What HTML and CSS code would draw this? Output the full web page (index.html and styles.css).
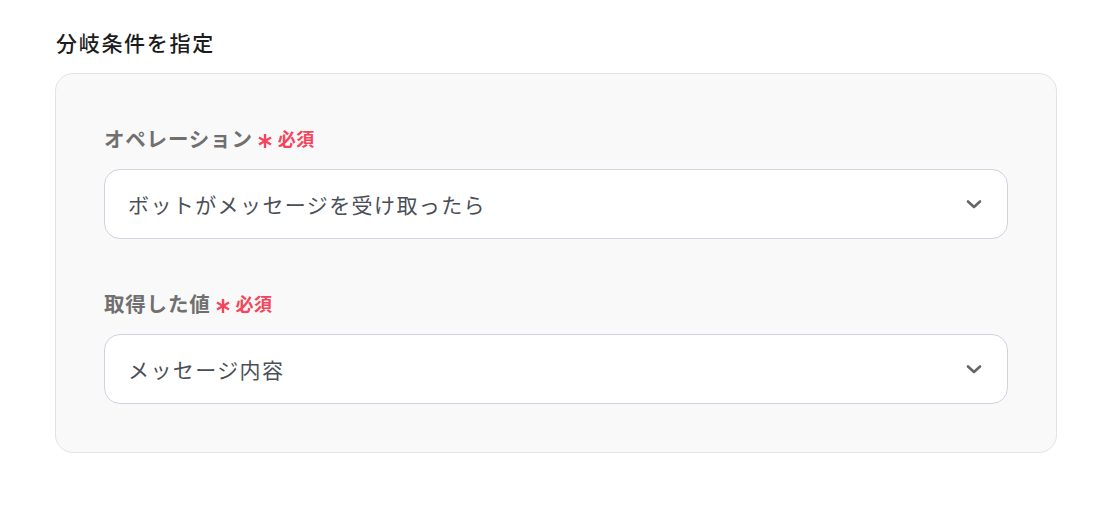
FILE: index.html
```html
<!DOCTYPE html>
<html lang="ja">
<head>
<meta charset="utf-8">
<link rel="stylesheet" href="styles.css">
</head>
<body>
<div class="page">
  <h2 class="title">分岐条件を指定</h2>
  <div class="card">
    <div class="field">
      <div class="label">オペレーション<svg class="ast" width="14" height="16" viewBox="0 0 14 16"><g stroke="#f5455c" stroke-width="2.4" stroke-linecap="butt"><line x1="7" y1="1" x2="7" y2="15"/><line x1="1" y1="4.5" x2="13" y2="11.5"/><line x1="1" y1="11.5" x2="13" y2="4.5"/></g></svg><span class="req">必須</span></div>
      <div class="select">
        <span class="value">ボットがメッセージを受け取ったら</span>
        <svg class="chev" width="18" height="12" viewBox="0 0 18 12"><path d="M3 3.5 L9 9 L15 3.5" fill="none" stroke="#666" stroke-width="2.6" stroke-linecap="round" stroke-linejoin="round"/></svg>
      </div>
    </div>
    <div class="field">
      <div class="label">取得した値<svg class="ast" width="14" height="16" viewBox="0 0 14 16"><g stroke="#f5455c" stroke-width="2.4" stroke-linecap="butt"><line x1="7" y1="1" x2="7" y2="15"/><line x1="1" y1="4.5" x2="13" y2="11.5"/><line x1="1" y1="11.5" x2="13" y2="4.5"/></g></svg><span class="req">必須</span></div>
      <div class="select">
        <span class="value">メッセージ内容</span>
        <svg class="chev" width="18" height="12" viewBox="0 0 18 12"><path d="M3 3.5 L9 9 L15 3.5" fill="none" stroke="#666" stroke-width="2.6" stroke-linecap="round" stroke-linejoin="round"/></svg>
      </div>
    </div>
  </div>
</div>
</body>
</html>
```

FILE: styles.css
```css
html, body {
  margin: 0;
  padding: 0;
  background: #ffffff;
}
body {
  font-family: "Noto Sans CJK JP", "Noto Sans", sans-serif;
}
.page {
  padding: 27px 44px 0 55px;
}
.title {
  margin: 0 0 16px 1px;
  font-size: 21px;
  line-height: 30px;
  font-weight: 500;
  color: #1c1c1c;
  letter-spacing: 1.7px;
}
.card {
  width: 904px;
  background: #f9f9f9;
  border: 1px solid #e3e3e6;
  border-radius: 18px;
  padding: 50px 48px 48px 48px;
  display: flex;
  flex-direction: column;
  gap: 50px;
}
.field {
  display: flex;
  flex-direction: column;
  gap: 17px;
}
.label {
  display: flex;
  align-items: center;
  font-size: 20.5px;
  line-height: 28px;
  font-weight: 700;
  color: #707070;
  letter-spacing: 0.8px;
}
.ast {
  display: block;
  margin-left: 5px;
  position: relative;
  top: 3px;
}
.req {
  color: #f5455c;
  font-size: 18px;
  font-weight: 700;
  margin-left: 6px;
  letter-spacing: 0.5px;
}
.select {
  height: 68px;
  background: #ffffff;
  border: 1px solid #cfd3dd;
  border-radius: 16px;
  display: flex;
  align-items: center;
  justify-content: space-between;
  padding: 0 24px 0 23px;
}
.value {
  font-size: 21px;
  color: #4a4f57;
  letter-spacing: 1.4px;
}
.chev {
  display: block;
}
```
